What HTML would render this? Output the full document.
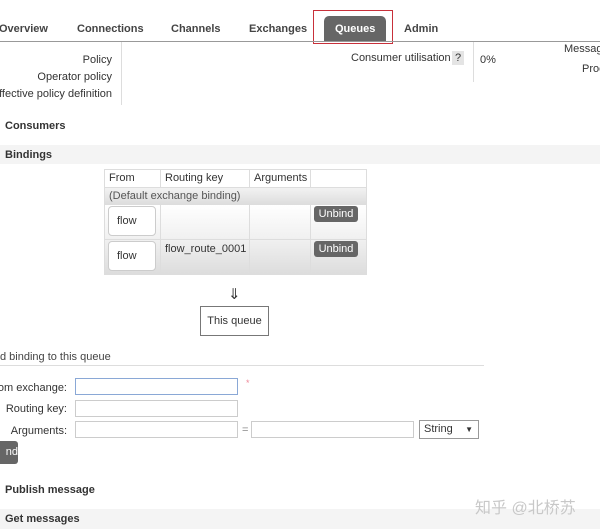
<!DOCTYPE html>
<html><head><meta charset="utf-8"><style>
body{margin:0;width:600px;height:529px;overflow:hidden;background:#fff;font-family:"Liberation Sans",sans-serif;font-size:11px;color:#333;position:relative}
.a{position:absolute;white-space:nowrap}
.b{font-weight:bold}
.nav{font-weight:bold;font-size:11px;color:#444;top:23px}
.inp{position:absolute;border:1px solid #ccc;background:#fff;height:15px}
.btn{position:absolute;background:#666;color:#fff;border-radius:3px;text-align:center}
table{table-layout:fixed}
td{border:1px solid #ddd;padding:0 4px;vertical-align:top;overflow:hidden;white-space:nowrap}
</style></head><body>
<div class="a nav" style="left:-1px">Overview</div>
<div class="a nav" style="left:77px">Connections</div>
<div class="a nav" style="left:171px">Channels</div>
<div class="a nav" style="left:249px">Exchanges</div>
<div class="a" style="left:324px;top:16px;width:62px;height:26px;background:#666;border-radius:5px 5px 0 0"></div>
<div class="a nav" style="left:335px;color:#fff">Queues</div>
<div class="a nav" style="left:404px">Admin</div>
<div class="a" style="left:313px;top:10px;width:78px;height:32px;border:1.5px solid #c8303a"></div>
<div class="a" style="left:0;top:41px;width:600px;height:1px;background:#999"></div>
<div class="a" style="right:488px;top:52px;text-align:right;line-height:17px">Policy<br>Operator policy<br>ffective policy definition</div>
<div class="a" style="left:121px;top:42px;width:1px;height:63px;background:#ddd"></div>
<div class="a" style="left:351px;top:52px">Consumer utilisation</div>
<div class="a" style="left:452px;top:51px;width:12px;height:14px;background:#e4e4e4;text-align:center;line-height:14px">?</div>
<div class="a" style="left:473px;top:42px;width:1px;height:40px;background:#ddd"></div>
<div class="a" style="left:480px;top:54px">0%</div>
<div class="a" style="left:564px;top:43px">Message</div>
<div class="a" style="left:582px;top:63px">Proc</div>
<div class="a b" style="left:5px;top:120px">Consumers</div>
<div class="a" style="left:0;top:145px;width:600px;height:19px;background:#f4f4f4"></div>
<div class="a b" style="left:5px;top:149px">Bindings</div>
<table class="a" style="left:104px;top:169px;border-collapse:collapse;width:262px;line-height:16px">
<colgroup><col style="width:56px"><col style="width:89px"><col style="width:61px"><col style="width:56px"></colgroup>
<tr style="height:18px"><td>From</td><td>Routing key</td><td>Arguments</td><td></td></tr>
<tr style="height:17px;background:linear-gradient(#f2f2f2,#dcdcdc)"><td colspan="4" style="color:#555">(Default exchange binding)</td></tr>
<tr style="height:35px;background:linear-gradient(#fff,#f0f0f0)"><td></td><td></td><td></td><td></td></tr>
<tr style="height:35px;background:linear-gradient(#f0f0f0,#dcdcdc)"><td></td><td style="padding-top:1px">flow_route_0001</td><td></td><td></td></tr>
</table>
<div class="a" style="left:108px;top:206px;width:46px;height:28px;border:1px solid #ccc;border-radius:4px;background:#fff;line-height:28px"><span style="margin-left:8px">flow</span></div>
<div class="a" style="left:108px;top:241px;width:46px;height:28px;border:1px solid #ccc;border-radius:4px;background:#fff;line-height:28px"><span style="margin-left:8px">flow</span></div>
<div class="btn" style="left:314px;top:206px;width:44px;height:16px;line-height:16px">Unbind</div>
<div class="btn" style="left:314px;top:241px;width:44px;height:16px;line-height:16px">Unbind</div>
<div class="a" style="left:228px;top:285px;font-size:15px;font-family:'DejaVu Sans',sans-serif">⇓</div>
<div class="a" style="left:200px;top:306px;width:67px;height:28px;border:1px solid #777;line-height:28px;text-align:center">This queue</div>
<div class="a" style="left:0;top:351px;color:#444">d binding to this queue</div>
<div class="a" style="left:0;top:365px;width:484px;height:1px;background:#ddd"></div>
<div class="a" style="right:533px;top:382px">om exchange:</div>
<div class="a" style="right:533px;top:403px">Routing key:</div>
<div class="a" style="right:533px;top:425px">Arguments:</div>
<div class="inp" style="left:75px;top:378px;width:161px;border-color:#8aa8d6"></div>
<div class="a" style="left:246px;top:378px;color:#e89;font-size:9px">*</div>
<div class="inp" style="left:75px;top:400px;width:161px"></div>
<div class="inp" style="left:75px;top:421px;width:161px"></div>
<div class="a" style="left:242px;top:424px;color:#888">=</div>
<div class="inp" style="left:251px;top:421px;width:161px"></div>
<div class="a" style="left:419px;top:420px;width:58px;height:17px;border:1px solid #999;background:#fff;line-height:17px"><span style="margin-left:4px">String</span><span style="position:absolute;right:5px;font-size:8px">▼</span></div>
<div class="btn" style="left:-6px;top:441px;width:24px;height:23px;line-height:23px;text-align:right">nd</div>
<div class="a b" style="left:5px;top:484px">Publish message</div>
<div class="a" style="left:0;top:509px;width:600px;height:20px;background:#f4f4f4"></div>
<div class="a b" style="left:5px;top:513px">Get messages</div>
<div class="a" style="left:475px;top:494px;font-size:16px;color:#c8c8c8;font-family:'Liberation Sans','Noto Sans CJK SC',sans-serif">知乎 @北桥苏</div>
</body></html>
